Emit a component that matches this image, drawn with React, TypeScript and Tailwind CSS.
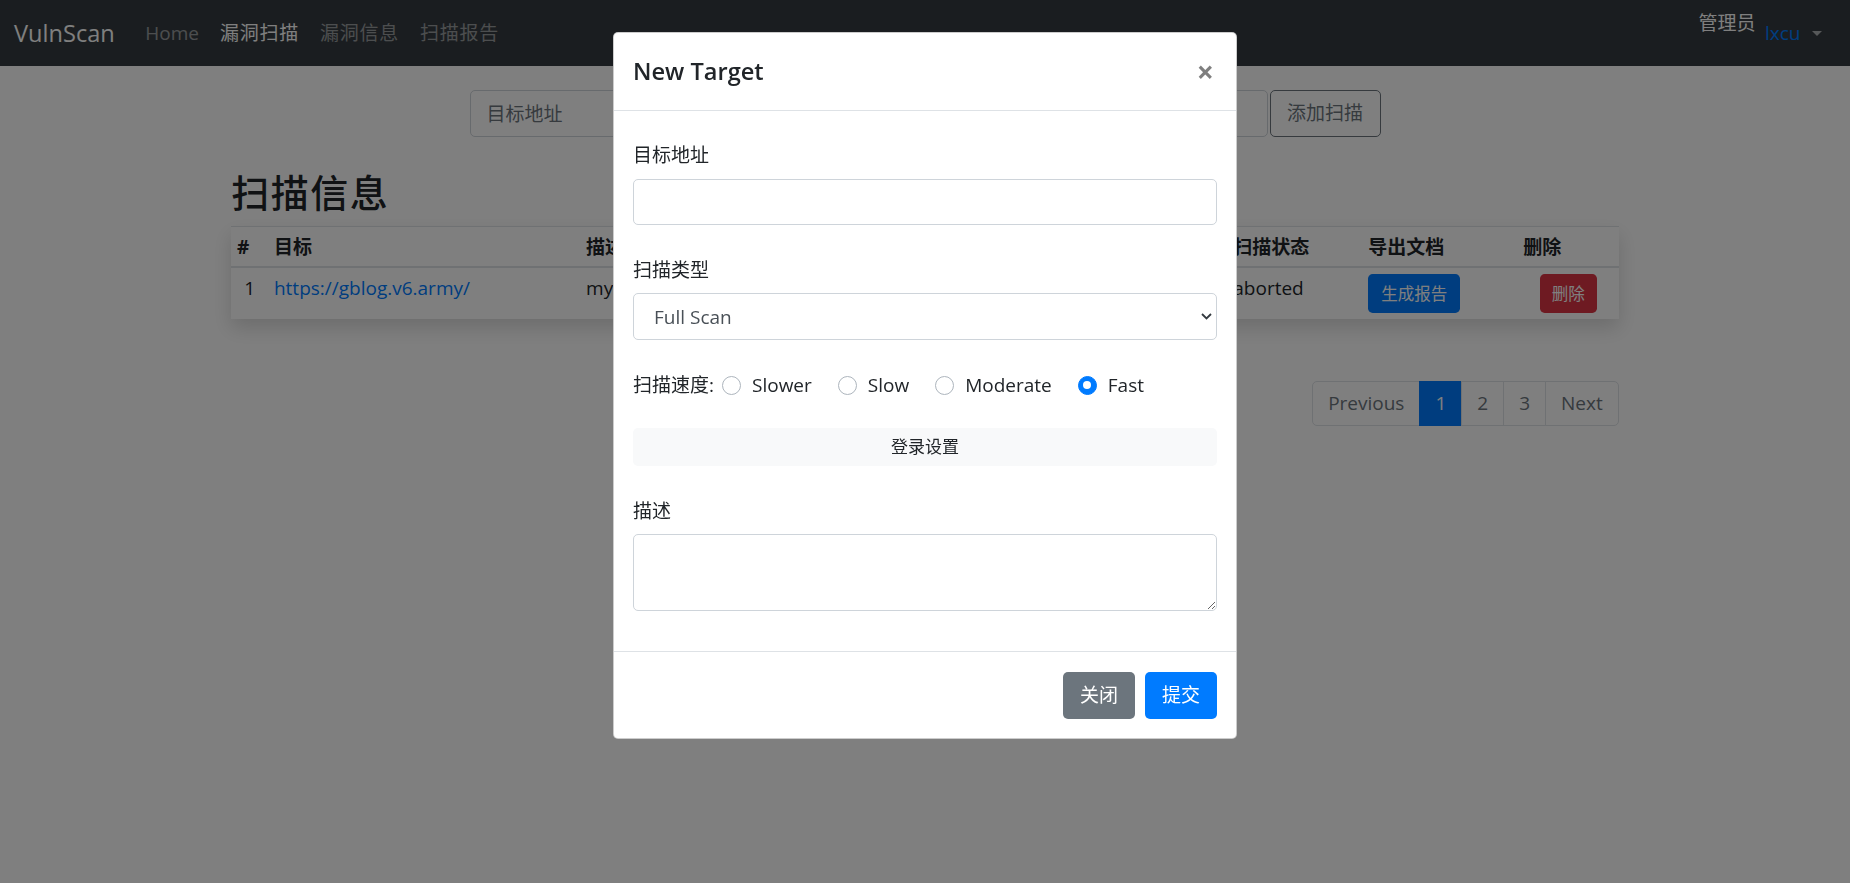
import React from 'react';

const navLinks = [
    { label: 'Home', active: false },
    { label: '漏洞扫描', active: true },
    { label: '漏洞信息', active: false },
    { label: '扫描报告', active: false },
];

const speeds = ['Slower', 'Slow', 'Moderate', 'Fast'];

const pages = [
    { label: 'Previous', active: false },
    { label: '1', active: true },
    { label: '2', active: false },
    { label: '3', active: false },
    { label: 'Next', active: false },
];

function Navbar() {
    return (
        <nav className="flex h-[66px] items-center bg-[#343a40] pl-[14px] pr-[19px]">
            <a className="mr-[20px] text-[23.6px] leading-[35px] text-white">VulnScan</a>
            <ul className="flex">
                {navLinks.map((link, i) => (
                    <li key={link.label}>
                        <a
                            className={`block px-[10.5px] text-[19px] leading-[28px] ${
                                i > 0 ? 'tracking-[0.04em]' : ''
                            } ${link.active ? 'text-white' : 'text-white/50'}`}
                        >
                            {link.label}
                        </a>
                    </li>
                ))}
            </ul>
            <div className="ml-auto flex items-center">
                <span className="mb-[20px] text-[19px] leading-[28px] text-white">管理员</span>
                <a className="flex items-center px-[9.5px] text-[19px] leading-[28px]">
                    <span className="text-[#007bff]">lxcu</span>
                    <span className="ml-[11px] h-0 w-0 border-x-[5.7px] border-t-[5.7px] border-x-transparent border-t-white/60" />
                </a>
            </div>
        </nav>
    );
}

function ScanTable() {
    return (
        <table className="w-full table-fixed border-collapse bg-white text-[19px] leading-[28px] text-[#212529] shadow-[0_9px_19px_rgba(0,0,0,0.15)]">
            <colgroup>
                <col className="w-[37px]" />
                <col className="w-[312px]" />
                <col className="w-[221px]" />
                <col className="w-[200px]" />
                <col className="w-[226px]" />
                <col className="w-[135px]" />
                <col className="w-[155px]" />
                <col className="w-[101px]" />
            </colgroup>
            <thead>
                <tr className="border-t border-b-2 border-[#dee2e6] text-left">
                    <th className="p-[5.7px] font-bold">#</th>
                    <th className="p-[5.7px] font-bold">目标</th>
                    <th className="p-[5.7px] font-bold">描述</th>
                    <th className="p-[5.7px] font-bold">扫描类型</th>
                    <th className="p-[5.7px] font-bold">扫描时间</th>
                    <th className="p-[5.7px] font-bold">扫描状态</th>
                    <th className="p-[5.7px] font-bold">导出文档</th>
                    <th className="p-[5.7px] font-bold">删除</th>
                </tr>
            </thead>
            <tbody>
                <tr className="border-t border-[#dee2e6] align-top">
                    <td className="p-[5.7px] text-center">1</td>
                    <td className="p-[5.7px]">
                        <a className="text-[#007bff]">https://gblog.v6.army/</a>
                    </td>
                    <td className="p-[5.7px]">my blog</td>
                    <td className="p-[5.7px]">Full Scan</td>
                    <td className="overflow-hidden whitespace-nowrap p-[5.7px]">2023-04-12 10:23</td>
                    <td className="p-[5.7px]">aborted</td>
                    <td className="p-[5.7px]">
                        <button className="h-[39px] w-[92px] rounded-[4.7px] bg-[#007bff] text-[16.5px] text-white">
                            生成报告
                        </button>
                    </td>
                    <td className="p-[5.7px] text-center">
                        <button className="h-[39px] w-[57px] rounded-[4.7px] bg-[#dc3545] text-[16.5px] text-white">
                            删除
                        </button>
                    </td>
                </tr>
            </tbody>
        </table>
    );
}

function Pagination() {
    return (
        <nav className="mt-[62px] flex justify-end">
            <ul className="flex">
                {pages.map((page, i) => (
                    <li key={page.label} className={i === 0 ? '' : '-ml-px'}>
                        <a
                            className={`flex h-[45px] items-center border px-[15px] text-[19px] ${
                                i === 0 ? 'rounded-l-[5px]' : ''
                            } ${i === pages.length - 1 ? 'rounded-r-[5px]' : ''} ${
                                page.active
                                    ? 'border-[#007bff] bg-[#007bff] text-white'
                                    : 'border-[#dee2e6] bg-white text-[#6c757d]'
                            }`}
                        >
                            {page.label}
                        </a>
                    </li>
                ))}
            </ul>
        </nav>
    );
}

function NewTargetModal() {
    return (
        <div className="fixed inset-0 flex justify-center">
            <div className="mt-[32px] h-fit w-[624px] rounded-[5px] border border-black/20 bg-white text-[#212529]">
                {/* Header */}
                <div className="flex h-[78px] items-center justify-between border-b border-[#dee2e6] px-[19px]">
                    <h5 className="text-[23.6px] font-semibold leading-[35px]">New Target</h5>
                    <button className="mr-[3px] text-[30px] font-bold leading-none text-black opacity-50">×</button>
                </div>

                {/* Body */}
                <div className="flex flex-col px-[19px] pt-[30px] pb-[40px] text-[19px] leading-[28px]">
                    <label>目标地址</label>
                    <input className="mt-[10px] h-[46px] w-full rounded-[5px] border border-[#ced4da] px-[14px] text-[#495057]" />

                    <label className="mt-[31px]">扫描类型</label>
                    <div className="relative mt-[9px]">
                        <select className="h-[47px] w-full appearance-none rounded-[5px] border border-[#ced4da] bg-white pl-[20px] text-[#495057]">
                            <option>Full Scan</option>
                        </select>
                        <svg
                            className="pointer-events-none absolute right-[5px] top-[20px]"
                            width="11"
                            height="7"
                            viewBox="0 0 11 7"
                            fill="none"
                        >
                            <path d="M1 1l4.5 4.5L10 1" stroke="#343a40" strokeWidth="1.8" />
                        </svg>
                    </div>

                    <div className="mt-[31px] flex h-[28px] items-center">
                        <span>扫描速度:</span>
                        {speeds.map((speed, i) => {
                            const checked = speed === 'Fast';
                            return (
                                <label
                                    key={speed}
                                    className={`flex items-center ${i === 0 ? 'ml-[8px]' : 'ml-[26px]'}`}
                                >
                                    <span
                                        className={`flex h-[19px] w-[19px] items-center justify-center rounded-full border ${
                                            checked ? 'border-[#007bff] bg-[#007bff]' : 'border-[#adb5bd] bg-white'
                                        }`}
                                    >
                                        {checked && <span className="h-[8px] w-[8px] rounded-full bg-white" />}
                                    </span>
                                    <span className="ml-[11px]">{speed}</span>
                                </label>
                            );
                        })}
                    </div>

                    <button className="mt-[29px] h-[38px] w-full rounded-[5px] bg-[#f8f9fa] text-[17px] text-[#212529]">
                        登录设置
                    </button>

                    <label className="mt-[31px]">描述</label>
                    <textarea className="mt-[9px] h-[77px] w-full rounded-[5px] border border-[#ced4da] px-[14px] text-[#495057]" />
                </div>

                {/* Footer */}
                <div className="flex justify-end gap-[10px] border-t border-[#dee2e6] px-[19px] pt-[20px] pb-[19px]">
                    <button className="h-[47px] w-[72px] rounded-[5px] bg-[#6c757d] text-[19px] text-white">关闭</button>
                    <button className="h-[47px] w-[72px] rounded-[5px] bg-[#007bff] text-[19px] text-white">提交</button>
                </div>
            </div>
        </div>
    );
}

export default function App() {
    return (
        <div className="relative min-h-[883px] bg-white font-['Segoe_UI','Open_Sans','Noto_Sans_CJK_SC',sans-serif]">
            <Navbar />

            <main className="mx-auto w-[75%]">
                <form className="mx-auto mt-[24px] flex w-[911px] gap-[2px]">
                    <input
                        placeholder="目标地址"
                        className="h-[47px] flex-1 rounded-[5px] border border-[#ced4da] px-[16px] text-[19px] placeholder:text-[#6c757d]"
                    />
                    <button
                        type="button"
                        className="h-[47px] w-[111px] rounded-[5px] border border-[#6c757d] text-[19px] text-[#6c757d]"
                    >
                        添加扫描
                    </button>
                </form>

                <h2 className="mt-[33px] mb-[11px] text-[38px] font-medium leading-[45px] tracking-[0.04em] text-[#212529]">
                    扫描信息
                </h2>

                <ScanTable />
                <Pagination />
            </main>

            {/* Backdrop + modal */}
            <div className="fixed inset-0 bg-black/50" />
            <NewTargetModal />
        </div>
    );
}
